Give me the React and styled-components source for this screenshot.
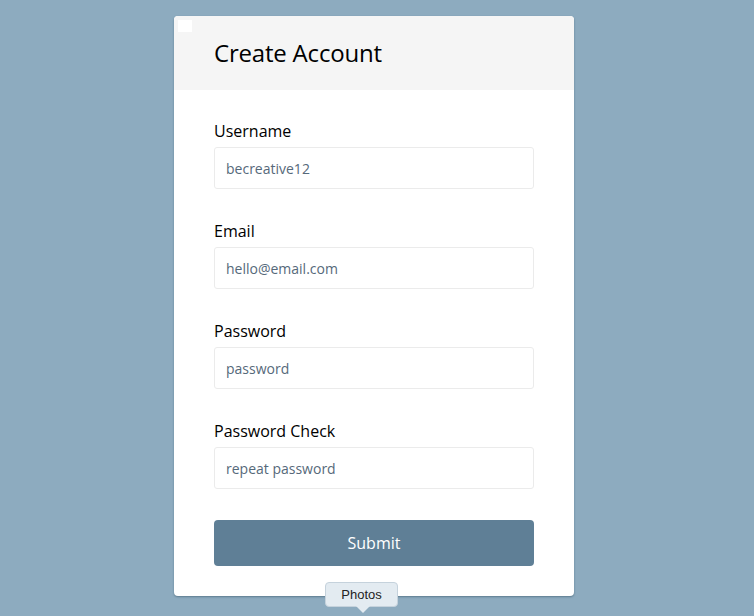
import React from "react";
import styled, { createGlobalStyle } from "styled-components";

const GlobalStyle = createGlobalStyle`
  html, body {
    margin: 0;
    padding: 0;
    background: #8dabbf;
    font-family: "Open Sans", "Liberation Sans", sans-serif;
  }
  * { box-sizing: border-box; }
`;

const Page = styled.div`
  width: 754px;
  height: 616px;
  display: flex;
  justify-content: center;
  padding: 16px 6px 0 0;
  position: relative;
  overflow: hidden;
`;

const Card = styled.div`
  width: 400px;
  height: 580px;
  background: #ffffff;
  border-radius: 4px;
  box-shadow: 0 1px 2px rgba(60, 90, 110, 0.6);
  position: relative;
  overflow: hidden;
`;

const Header = styled.div`
  height: 74px;
  background: #f5f5f5;
  display: flex;
  align-items: center;
  padding-left: 40px;
  padding-bottom: 2px;
`;

const Corner = styled.span`
  position: absolute;
  left: 4px;
  top: 4px;
  width: 14px;
  height: 12px;
  background: #ffffff;
`;

const Title = styled.h1`
  margin: 0;
  font-size: 24px;
  font-weight: 400;
  color: #000;
  letter-spacing: -0.2px;
`;

const Form = styled.form`
  padding: 30px 40px 0;
  display: flex;
  flex-direction: column;
`;

const Field = styled.div`
  display: flex;
  flex-direction: column;
  gap: 5px;
  margin-bottom: 31px;
`;

const Label = styled.label`
  font-size: 16px;
  line-height: 22px;
  color: #000;
`;

const Input = styled.input`
  width: 320px;
  height: 42px;
  border: 1px solid #ebebeb;
  border-radius: 3px;
  padding: 0 11px;
  font-family: inherit;
  font-size: 14px;
  color: #56697a;
  background: #fff;
  outline: none;
  &::placeholder { color: #56697a; }
`;

const Submit = styled.button`
  margin-top: 0;
  width: 320px;
  height: 46px;
  border: none;
  border-radius: 4px;
  background: #5f7f96;
  color: #fff;
  font-family: inherit;
  font-size: 16px;
`;

const Tooltip = styled.div`
  position: absolute;
  left: 325px;
  top: 582px;
  width: 73px;
  height: 25px;
  border-radius: 4px;
  background: #e3ebf1;
  border: 1px solid #c5d2dc;
  font-size: 13px;
  color: #222;
  display: flex;
  align-items: center;
  justify-content: center;
  font-family: "Liberation Sans", sans-serif;
  &::after {
    content: "";
    position: absolute;
    left: 30px;
    bottom: -7px;
    border-left: 7px solid transparent;
    border-right: 7px solid transparent;
    border-top: 7px solid #e3ebf1;
  }
`;

const fields = [
  { label: "Username", value: "becreative12" },
  { label: "Email", value: "hello@email.com" },
  { label: "Password", placeholder: "password" },
  { label: "Password Check", placeholder: "repeat password" },
];

export default function App() {
  return (
    <>
      <GlobalStyle />
      <Page>
        <Card>
          <Corner />
          <Header>
            <Title>Create Account</Title>
          </Header>
          <Form onSubmit={(e) => e.preventDefault()}>
            {fields.map((f) => (
              <Field key={f.label}>
                <Label>{f.label}</Label>
                <Input defaultValue={f.value} placeholder={f.placeholder} readOnly />
              </Field>
            ))}
            <Submit type="submit">Submit</Submit>
          </Form>
        </Card>
        <Tooltip>Photos</Tooltip>
      </Page>
    </>
  );
}
